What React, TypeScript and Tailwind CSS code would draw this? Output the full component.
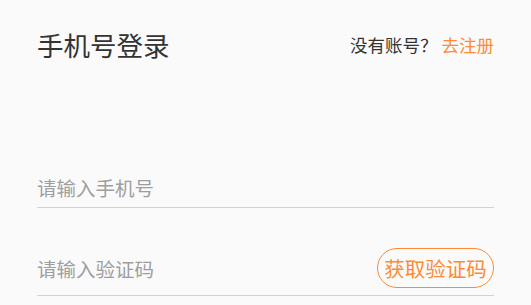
import { useState } from "react";

const App = () => {
  const [phone, setPhone] = useState("");
  const [code, setCode] = useState("");

  return (
    <div
      className="min-h-[305px] w-full bg-[#fafafa] px-[37px] pt-[26px]"
      style={{ fontFamily: '"Noto Sans CJK SC", "Noto Sans", sans-serif' }}
    >
      <div className="flex items-center justify-between">
        <h1 className="text-[26.5px] leading-[38px] font-normal text-[#333333]">
          手机号登录
        </h1>
        <p className="text-[17.5px] leading-[24px] text-[#333333]">
          没有账号？<span className="ml-[4px] text-[#ff8a33]">去注册</span>
        </p>
      </div>

      <div className="mt-[103px] border-b border-[#d2d2d2]">
        <input
          type="tel"
          placeholder="请输入手机号"
          className="h-[40px] w-full bg-transparent text-[19.5px] text-[#333] outline-none placeholder:text-[#9e9e9e]"
          value={phone}
          onChange={(e) => setPhone(e.target.value)}
        />
      </div>

      <div className="mt-[40px] flex items-center border-b border-[#d2d2d2] pb-[7px]">
        <input
          type="text"
          placeholder="请输入验证码"
          className="h-[40px] flex-1 bg-transparent text-[19.5px] text-[#333] outline-none placeholder:text-[#9e9e9e]"
          value={code}
          onChange={(e) => setCode(e.target.value)}
        />
        <button className="h-[40px] w-[117px] rounded-full border-[1.5px] border-[#ff8a33] text-[20.5px] leading-none text-[#ff8a33]">
          获取验证码
        </button>
      </div>
    </div>
  );
};

export default App;
